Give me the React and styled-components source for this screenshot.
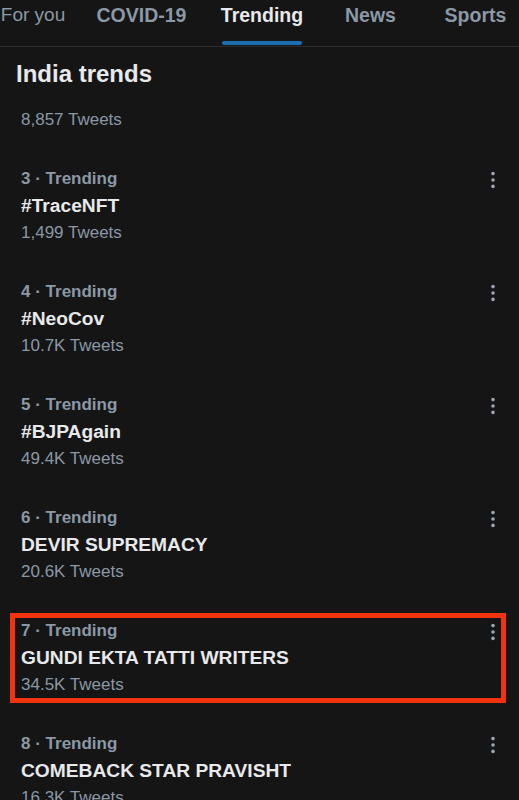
// Trends tab of a dark social feed.
import styled, { createGlobalStyle } from 'styled-components';

const GlobalStyle = createGlobalStyle`
  html, body {
    margin: 0;
    padding: 0;
    background: #151515;
  }
  body {
    font-family: "Liberation Sans", Arial, sans-serif;
    color: #e7e9ea;
    overflow: hidden;
  }
`;

const Page = styled.div`
  width: 519px;
  height: 800px;
  overflow: hidden;
  background: #151515;
`;

// Tab bar, scrolled a touch to the right so the first tab is clipped.
const TabBar = styled.nav`
  display: flex;
  height: 46px;
  border-bottom: 1px solid #2a2c2e;
  margin-left: -14px;
`;

const Tab = styled.div`
  position: relative;
  flex: 0 0 ${(p) => p.$width}px;
  display: flex;
  justify-content: center;
  padding-top: 3px;
  box-sizing: border-box;
  font-size: ${(p) => (p.$light ? 19 : 19.5)}px;
  line-height: 24px;
  font-weight: ${(p) => (p.$light ? 400 : 700)};
  color: ${(p) => (p.$active ? '#e7e9ea' : '#8b98a5')};
`;

const Indicator = styled.span`
  position: absolute;
  bottom: 1px;
  left: 50%;
  width: 80px;
  height: 4px;
  margin-left: -40px;
  border-radius: 2px;
  background: #1b70b2;
`;

const Heading = styled.h2`
  margin: 11px 0 0;
  padding: 0 16px;
  font-size: 24px;
  line-height: 32px;
  font-weight: 700;
  color: #e7e9ea;
`;

const List = styled.div`
  display: flex;
  flex-direction: column;
  margin-top: 16px;
`;

const Item = styled.div`
  position: relative;
  display: flex;
  padding: 0 16px 32px 21px;

  ${(p) =>
    p.$marked &&
    `
    &::after {
      content: "";
      position: absolute;
      left: 10px;
      right: 13px;
      top: -4px;
      height: 90px;
      box-sizing: border-box;
      border: 5px solid #f2330f;
      pointer-events: none;
    }
  `}
`;

const Text = styled.div`
  flex: 1;
  display: flex;
  flex-direction: column;
`;

const Meta = styled.div`
  font-size: 17px;
  line-height: 27px;
  font-weight: 700;
  color: #8b98a5;
`;

const Title = styled.div`
  font-size: 19.2px;
  line-height: 27px;
  font-weight: 700;
  color: #e7e9ea;
`;

const Count = styled.div`
  font-size: 17px;
  line-height: 27px;
  color: #8b98a5;
`;

const Menu = styled.button`
  flex: 0 0 20px;
  height: 20px;
  margin: 5px 0 0;
  padding: 0;
  border: none;
  background: none;
  display: flex;
  align-items: center;
  justify-content: center;
  color: #9ba6b0;
`;

const Dots = () => (
  <svg width="6" height="18" viewBox="0 0 6 18">
    <circle cx="3" cy="2.6" r="1.8" fill="currentColor" />
    <circle cx="3" cy="9" r="1.8" fill="currentColor" />
    <circle cx="3" cy="15.4" r="1.8" fill="currentColor" />
  </svg>
);

const tabs = [
  { label: 'For you', width: 94, light: true },
  { label: 'COVID-19', width: 123 },
  { label: 'Trending', width: 118, active: true },
  { label: 'News', width: 99 },
  { label: 'Sports', width: 111 },
];

const trends = [
  { rank: 3, name: '#TraceNFT', count: '1,499 Tweets' },
  { rank: 4, name: '#NeoCov', count: '10.7K Tweets' },
  { rank: 5, name: '#BJPAgain', count: '49.4K Tweets' },
  { rank: 6, name: 'DEVIR SUPREMACY', count: '20.6K Tweets' },
  { rank: 7, name: 'GUNDI EKTA TATTI WRITERS', count: '34.5K Tweets', marked: true },
  { rank: 8, name: 'COMEBACK STAR PRAVISHT', count: '16.3K Tweets' },
];

export default function App() {
  return (
    <Page>
      <GlobalStyle />
      <TabBar>
        {tabs.map((t) => (
          <Tab key={t.label} $width={t.width} $active={t.active} $light={t.light}>
            {t.label}
            {t.active && <Indicator />}
          </Tab>
        ))}
      </TabBar>
      <Heading>India trends</Heading>
      <List>
        <Item>
          <Text>
            <Count>8,857 Tweets</Count>
          </Text>
        </Item>
        {trends.map((t) => (
          <Item key={t.rank} $marked={t.marked}>
            <Text>
              <Meta>{t.rank} · Trending</Meta>
              <Title>{t.name}</Title>
              <Count>{t.count}</Count>
            </Text>
            <Menu aria-label="More">
              <Dots />
            </Menu>
          </Item>
        ))}
      </List>
    </Page>
  );
}
